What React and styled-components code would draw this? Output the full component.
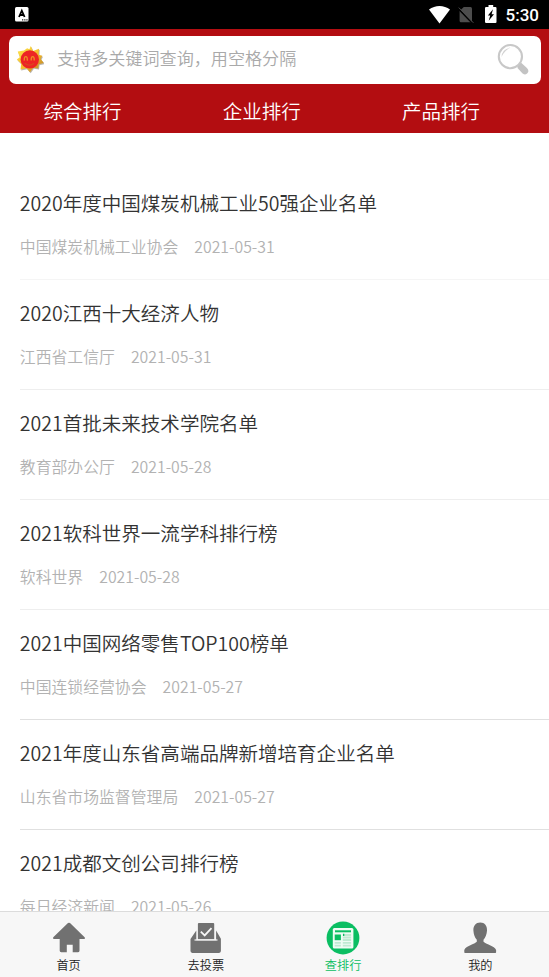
import React from "react";
import styled, { createGlobalStyle } from "styled-components";

const tabs = ["综合排行", "企业排行", "产品排行"];

const articles = [
  { title: "2020年度中国煤炭机械工业50强企业名单", source: "中国煤炭机械工业协会", date: "2021-05-31" },
  { title: "2020江西十大经济人物", source: "江西省工信厅", date: "2021-05-31" },
  { title: "2021首批未来技术学院名单", source: "教育部办公厅", date: "2021-05-28" },
  { title: "2021软科世界一流学科排行榜", source: "软科世界", date: "2021-05-28" },
  { title: "2021中国网络零售TOP100榜单", source: "中国连锁经营协会", date: "2021-05-27" },
  { title: "2021年度山东省高端品牌新增培育企业名单", source: "山东省市场监督管理局", date: "2021-05-27" },
  { title: "2021成都文创公司排行榜", source: "每日经济新闻", date: "2021-05-26" },
];

const KeyboardIcon = () => (
  <svg width="14" height="15" viewBox="0 0 14 15">
    <rect width="13.5" height="14.5" rx="1.5" fill="#fff" />
    <path d="M4 10 6.8 3.7 9.6 10M5 8h3.6" fill="none" stroke="#000" strokeWidth="1.8" />
    <path d="M7 12.8h1.3M9.2 12.8h1.3M11.3 12.8h1.3" stroke="#222" strokeWidth="1.2" />
  </svg>
);

const WifiIcon = () => (
  <svg width="21" height="18" viewBox="0 0 21 18">
    <path d="M0 3.6C6-1.2 15-1.2 21 3.6L10.5 17.5Z" fill="#fff" />
  </svg>
);

const NoSimIcon = () => (
  <svg width="16" height="18" viewBox="0 0 16 18">
    <path d="M5.8 1H12.6Q14 1 14 2.5V16.2H3Q1.6 16.2 1.6 14.7V5Z" fill="#4d4d4d" />
    <path d="M.2 2.6 14.6 17.6" stroke="#000" strokeWidth="1.4" />
    <path d="M.8 1.6 15.4 16.8" stroke="#4d4d4d" strokeWidth="1" />
  </svg>
);

const BatteryIcon = () => (
  <svg width="12" height="19" viewBox="0 0 12 19">
    <path d="M3.5 0h4.7v2h2.2q1.1 0 1.1 1.1v13.8q0 1.1-1.1 1.1H1.2Q0 18 0 16.9V3.1Q0 2 1.2 2h2.3Z" fill="#fff" />
    <path d="M8 4.2 2.9 10.5h2.3L3.7 15.7 9 9.2H6.6Z" fill="#000" />
  </svg>
);

const SunIcon = () => (
  <svg width="28" height="30" viewBox="0 0 28 30">
    <defs>
      <linearGradient id="rays" x1="0" y1="0" x2="1" y2="1">
        <stop offset="0" stopColor="#ffe84c" />
        <stop offset=".55" stopColor="#f3ba2d" />
        <stop offset="1" stopColor="#b47b25" />
      </linearGradient>
    </defs>
    <path
      d="m14.8 1 2.2 5 6-2.2-.3 6 3.6 1-1.6 3.2 3.1 4-5 1.3-.5 4.1-5.1-.6-3.2 4.5-3.5-4-6 1.1.7-5.7L.8 14.4l3-2.2L1.7 6.4l6.3-.9 3.1-2.2 2.3 1Z"
      transform="translate(.7 1)"
      fill="#8e867a"
      opacity=".6"
    />
    <path
      d="m14.8 1 2.2 5 6-2.2-.3 6 3.6 1-1.6 3.2 3.1 4-5 1.3-.5 4.1-5.1-.6-3.2 4.5-3.5-4-6 1.1.7-5.7L.8 14.4l3-2.2L1.7 6.4l6.3-.9 3.1-2.2 2.3 1Z"
      fill="url(#rays)"
    />
    <circle cx="13.8" cy="14.4" r="9.2" fill="#ed2424" />
    <path
      d="M8.3 15.6q-.2-4 1.5-4t1.5 4M15.2 15.6q-.1-4 1.5-4t1.5 4"
      fill="none"
      stroke="#ee8f22"
      strokeWidth="1.3"
    />
    <path d="M8.6 18.2q5 3.8 9.5 0" fill="none" stroke="#d84a20" strokeWidth="1.2" />
  </svg>
);

const SearchIcon = () => (
  <svg width="32" height="33" viewBox="0 0 32 33">
    <path d="m20.5 22.6 3.4-3.1 6 5.6q2.6 2.6.7 5-2.1 2.5-5 .3l-5.1-5.5Z" fill="#c3c3c3" />
    <circle cx="13.4" cy="13.6" r="11.6" fill="#fff" stroke="#c8c8c8" strokeWidth="2.1" />
    <path d="M4.5 14Q5 6 13.5 4.6 7.6 7.4 4.5 14Z" fill="#d2d2d2" />
  </svg>
);

const HomeIcon = () => (
  <svg width="34" height="34" viewBox="0 0 34 34">
    <path
      d="M16 2.1q1-.9 2 0l14.6 14.1q1.2 1.3-.3 1.7h-4.8v11.9q0 1.4-1.4 1.4h-5.4v-7.4h-5.9v7.4H9.2q-1.5 0-1.5-1.4V17.9H2.1Q.2 17.8 1.5 16Z"
      fill="#717171"
    />
  </svg>
);

const VoteIcon = () => (
  <svg width="34" height="34" viewBox="0 0 34 34">
    <path d="M7.3 9.5v9.8h19.8V9.5l4.8 8.3v12.3q0 1.8-1.8 1.8H3.3q-1.8 0-1.8-1.8V18Z" fill="#717171" />
    <path d="M8.9 2.9q0-.9 1-.9h14.4q.9 0 .9.9v15.3H8.9Z" fill="#717171" />
    <path d="m11.8 10.6 3.9 3.8 6.8-7.2" fill="none" stroke="#f7f7f7" strokeWidth="1.8" />
    <path d="M5.5 19h23" stroke="#f7f7f7" strokeWidth="1.2" />
  </svg>
);

const RankIcon = () => (
  <svg width="34" height="34" viewBox="0 0 34 34">
    <circle cx="17" cy="17" r="16.4" fill="#0abe62" />
    <rect x="6.8" y="7" width="20.6" height="20.5" rx="1.5" fill="#effbf4" />
    <path d="M9 10.3h16" stroke="#0abe62" strokeWidth="2" />
    <path d="M8.7 13.5h6.2v5.7H8.7Z" fill="#0abe62" />
    <path
      d="M16.8 14h8.3M16.8 16.5h8.3M16.8 19h8.3M8.7 21.9h6.2M8.7 24.6h6.2M16.8 21.9h8.3M16.8 24.6h8.3"
      stroke="#bfead2"
      strokeWidth="1.9"
    />
    <path d="M17 12.7h1.3V15H17Z" fill="#0abe62" />
  </svg>
);

const UserIcon = () => (
  <svg width="34" height="34" viewBox="0 0 34 34">
    <path
      d="M17.3 1.6c4.4 0 7 3.4 6.7 7.9-.2 3.8-1.6 7.1-3.5 9.2v2.1c2 2.3 11.2 4.4 12.6 8.1v2.3q0 .7-.7.7H2q-.7 0-.7-.7v-2.3c1.4-3.7 10.6-5.8 12.5-8.1v-2.1c-2-2.1-3.2-5.4-3.4-9.2-.2-4.5 2.4-7.9 6.9-7.9Z"
      fill="#717171"
    />
  </svg>
);

const navItems = [
  { label: "首页", icon: HomeIcon },
  { label: "去投票", icon: VoteIcon },
  { label: "查排行", icon: RankIcon, active: true },
  { label: "我的", icon: UserIcon },
];

export default function App() {
  return (
    <Screen>
      <GlobalStyle />
      <StatusBar>
        <KeyboardIcon />
        <StatusIcons>
          <WifiIcon />
          <NoSimIcon />
          <BatteryIcon />
          <Clock>5:30</Clock>
        </StatusIcons>
      </StatusBar>
      <Header>
        <SearchBar>
          <SunIcon />
          <SearchInput placeholder="支持多关键词查询，用空格分隔" />
          <SearchIcon />
        </SearchBar>
        <Tabs>
          {tabs.map((tab) => (
            <Tab key={tab}>{tab}</Tab>
          ))}
        </Tabs>
      </Header>
      <List>
        {articles.map((article) => (
          <Article key={article.title}>
            <Title>{article.title}</Title>
            <Meta>
              <span>{article.source}</span>
              <span>{article.date}</span>
            </Meta>
          </Article>
        ))}
      </List>
      <BottomNav>
        {navItems.map(({ label, icon: Icon, active }) => (
          <NavItem key={label} $active={active}>
            <Icon />
            <span>{label}</span>
          </NavItem>
        ))}
      </BottomNav>
    </Screen>
  );
}

const GlobalStyle = createGlobalStyle`
  * {
    box-sizing: border-box;
  }

  body {
    margin: 0;
    background: #fff;
    font-family: "Noto Sans CJK SC", sans-serif;
    font-weight: 350;
  }

  svg {
    display: block;
    flex-shrink: 0;
  }
`;

const Screen = styled.div`
  display: flex;
  flex-direction: column;
  height: 977px;
  overflow: hidden;
`;

const StatusBar = styled.div`
  display: flex;
  align-items: center;
  justify-content: space-between;
  flex-shrink: 0;
  height: 29px;
  padding: 0 10px 0 15px;
  background: #000;
`;

const StatusIcons = styled.div`
  display: flex;
  align-items: center;

  svg:nth-child(2) {
    margin: 1px 10.5px 0 8.5px;
  }
`;

const Clock = styled.span`
  margin-left: 9px;
  padding-top: 2px;
  color: #fff;
  font: 500 17px/29px Roboto, sans-serif;
`;

const Header = styled.header`
  flex-shrink: 0;
  height: 104px;
  padding-top: 6.5px;
  background: #b30d11;
`;

const SearchBar = styled.div`
  display: flex;
  align-items: center;
  height: 48.5px;
  margin: 0 8.5px;
  padding: 0 12px 0 7.5px;
  border-radius: 7px;
  background: #fff;
`;

const SearchInput = styled.input`
  flex: 1;
  min-width: 0;
  height: 40px;
  margin: 0 0 4px 13px;
  padding: 0;
  border: 0;
  outline: 0;
  background: none;
  font: 350 17.1px "Noto Sans CJK SC", sans-serif;

  &::placeholder {
    color: #a9a9a9;
  }
`;

const Tabs = styled.nav`
  display: grid;
  grid-template-columns: repeat(3, 179.3px);
  padding-left: 43.5px;
`;

const Tab = styled.a`
  color: #fff;
  font-size: 19.5px;
  line-height: 54px;
`;

const List = styled.main`
  flex: 1;
  min-height: 0;
  padding: 37px 0 0 19.8px;
  overflow: hidden;
`;

const Article = styled.article`
  height: 110px;
  padding-top: 18px;
  border-bottom: 1px solid #e0e0e0;

  &:nth-child(-n + 4) {
    border-color: #eee;
  }

  &:first-child {
    border-color: #f5f5f5;
  }
`;

const Title = styled.h2`
  margin: 0;
  color: #333;
  font-size: 19.54px;
  font-weight: 350;
  line-height: 30px;
`;

const Meta = styled.div`
  display: flex;
  gap: 16px;
  margin-top: 17px;
  color: #b2b2b2;
  font-size: 15.85px;
  line-height: 24px;
`;

const BottomNav = styled.nav`
  display: grid;
  grid-template-columns: repeat(4, 1fr);
  flex-shrink: 0;
  height: 66px;
  border-top: 1px solid #dcdcdc;
  background: #f7f7f7;
`;

const NavItem = styled.a`
  display: flex;
  flex-direction: column;
  align-items: center;
  padding-top: 9px;
  color: ${(props) => (props.$active ? "#0abe62" : "#222")};
  font-size: 12.2px;
  line-height: 20px;
`;
